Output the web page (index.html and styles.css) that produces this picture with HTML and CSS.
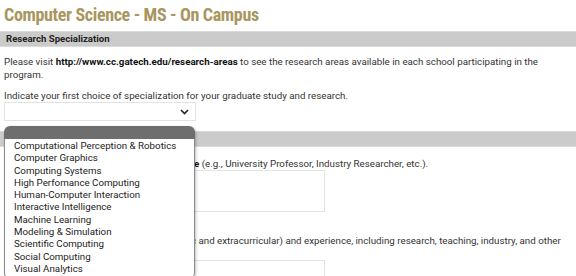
FILE: index.html
```html
<!DOCTYPE html>
<html lang="en">
<head>
    <meta charset="UTF-8">
    <meta name="viewport" content="width=device-width, initial-scale=1.0">
    <title>Computer Science - MS - On Campus</title>
    <link rel="stylesheet" href="styles.css">
</head>
<body>

    <h1 class="title">Computer Science - MS - On Campus</h1>

    <div class="section">
        <h2 class="bar">Research Specialization</h2>
        <p>Please visit <b>http://www.cc.gatech.edu/research-areas</b> to see the research areas available in each school participating in the program.</p>
        <p class="label">Indicate your first choice of specialization for your graduate study and research.</p>

        <div class="select-wrap">
            <div class="select">
                <svg class="chevron" width="9" height="6" viewBox="0 0 9 6">
                    <path d="M1 1 L4.5 4.5 L8 1" fill="none" stroke="#222" stroke-width="1.6"/>
                </svg>
            </div>

            <!-- open list of the select -->
            <div class="dropdown">
                <div class="dropdown-head"></div>
                <ul class="options">
                    <li>Computational Perception &amp; Robotics</li>
                    <li>Computer Graphics</li>
                    <li>Computing Systems</li>
                    <li>High Perfomance Computing</li>
                    <li>Human-Computer Interaction</li>
                    <li>Interactive Intelligence</li>
                    <li>Machine Learning</li>
                    <li>Modeling &amp; Simulation</li>
                    <li>Scientific Computing</li>
                    <li>Social Computing</li>
                    <li>Visual Analytics</li>
                </ul>
            </div>
        </div>
    </div>

    <div class="section">
        <h2 class="bar">Background</h2>
        <p class="label first">Please indicate your primary <b>career objective</b> (e.g., University Professor, Industry Researcher, etc.).</p>
        <div class="textbox"></div>
        <p class="label second">Describe your previous education (academic and extracurricular) and experience, including research, teaching, industry, and other activities.</p>
        <div class="textbox"></div>
    </div>

</body>
</html>
```

FILE: styles.css
```css
body {
    font-family: Roboto, Arial, sans-serif;
    font-size: 9.75px;
    color: #333;
    background-color: #fff;
    margin: 0;
    padding: 0 4px;
}

.title {
    font-family: "Roboto Condensed", "Liberation Sans Narrow", "DejaVu Sans Condensed", sans-serif;
    font-size: 18px;
    letter-spacing: -0.35px;
    font-weight: bold;
    color: #a8965e;
    margin: 0;
    padding-top: 4px;
    line-height: 22px;
}

.bar {
    font-size: 9.6px;
    font-weight: bold;
    color: #222;
    background-color: #cbcbcb;
    border-top: 1px solid #dadada;
    border-bottom: 1px solid #dadada;
    margin: 5px -4px 0;
    padding: 0 6px;
    line-height: 14px;
}

p {
    margin: 8px 0 0 0;
    line-height: 13px;
}

p b {
    color: #111;
}

.select-wrap {
    position: relative;
}

.select {
    width: 184px;
    height: 17px;
    border: 1px solid #e2e2e2;
    display: flex;
    align-items: center;
    justify-content: flex-end;
    padding-right: 6px;
}

.chevron {
    display: block;
}

.dropdown {
    position: absolute;
    left: 0;
    top: 24px;
    width: 191px;
    z-index: 2;
    box-shadow: 1px 1px 3px rgba(0, 0, 0, 0.25);
    border-radius: 6px;
}

.dropdown-head {
    height: 13px;
    background-color: #6e6e6e;
    border-radius: 6px 6px 0 0;
}

.options {
    list-style: none;
    margin: 0;
    padding: 1px 0 2px 9px;
    background-color: #fff;
    border: 1px solid #8a8a8a;
    border-top: none;
    border-radius: 0 0 5px 5px;
    color: #222;
    font-size: 9.75px;
}

.options li {
    line-height: 12.3px;
    white-space: nowrap;
}

.section + .section .bar {
    margin-top: 10px;
}

.label.first {
    margin-top: 10px;
}

.label.second {
    margin-top: 22px;
}

.textbox {
    width: 319px;
    height: 40px;
    border: 1px solid #e4e4e4;
    margin-top: 0;
}
```
